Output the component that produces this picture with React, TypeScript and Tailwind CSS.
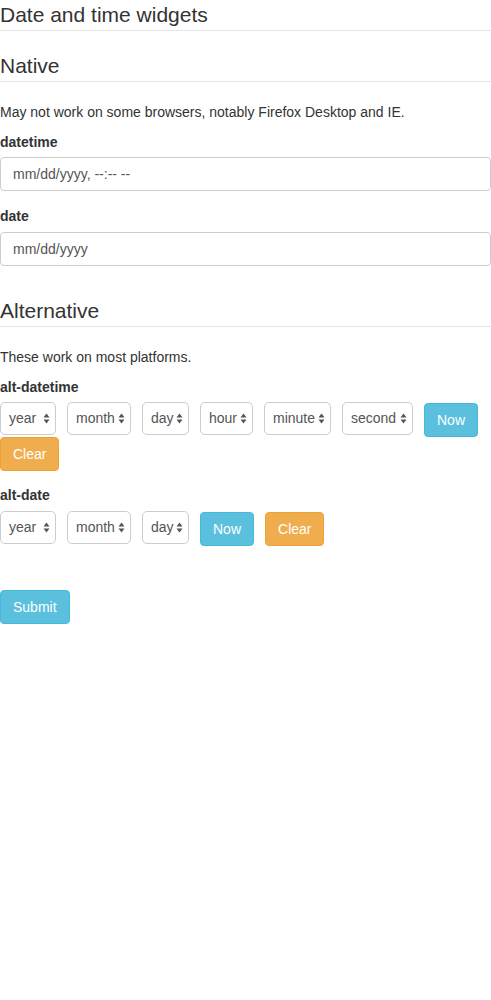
import React from 'react';

const font = { fontFamily: '"Liberation Sans", Arial, sans-serif' };

function Legend({ children, className = '' }: { children: React.ReactNode; className?: string }) {
  return (
    <div
      className={`h-[31px] border-b border-[#e5e5e5] text-[21px] leading-[30px] text-[#333] ${className}`}
    >
      {children}
    </div>
  );
}

function Label({ children }: { children: React.ReactNode }) {
  return <div className="h-[20px] text-[14px] font-bold leading-[20px] text-[#333]">{children}</div>;
}

function Arrows() {
  return (
    <svg width="7" height="11" viewBox="0 0 7 11" className="shrink-0">
      <path d="M3.5 0.5 L6.5 4.5 L0.5 4.5 Z" fill="#555" />
      <path d="M3.5 10.5 L6.5 6.5 L0.5 6.5 Z" fill="#555" />
    </svg>
  );
}

function FakeSelect({ label, width }: { label: string; width: string }) {
  return (
    <div
      className={`flex h-[33px] items-center justify-between rounded-[5px] border border-[#ccc] bg-white pl-[8px] pr-[5px] text-[14px] text-[#555] ${width}`}
    >
      <span>{label}</span>
      <Arrows />
    </div>
  );
}

function Btn({
  children,
  kind,
  className = '',
}: {
  children: React.ReactNode;
  kind: 'info' | 'warning';
  className?: string;
}) {
  const cls =
    kind === 'info'
      ? 'bg-[#5bc0de] border-[#46b8da]'
      : 'bg-[#f0ad4e] border-[#eea236]';
  return (
    <button
      type="button"
      className={`h-[34px] rounded-[4px] border px-[12px] text-[14px] leading-[20px] text-white ${cls} ${className}`}
    >
      {children}
    </button>
  );
}

function TextInput({ placeholder }: { placeholder: string }) {
  return (
    <div className="flex h-[34px] w-[491px] items-center rounded-[4px] border border-[#ccc] bg-white px-[12px] text-[14px] text-[#555]">
      {placeholder}
    </div>
  );
}

export default function App() {
  return (
    <div className="min-h-[1000px] w-[491px] bg-white text-[14px] text-[#333]" style={font}>
      <Legend>Date and time widgets</Legend>

      <Legend className="mt-[20px]">Native</Legend>
      <p className="mt-[20px] h-[20px] leading-[20px]">
        May not work on some browsers, notably Firefox Desktop and IE.
      </p>

      <div className="mt-[10px]">
        <Label>datetime</Label>
        <div className="mt-[5px]">
          <TextInput placeholder="mm/dd/yyyy, --:-- --" />
        </div>
      </div>

      <div className="mt-[15px]">
        <Label>date</Label>
        <div className="mt-[6px]">
          <TextInput placeholder="mm/dd/yyyy" />
        </div>
      </div>

      <Legend className="mt-[30px]">Alternative</Legend>
      <p className="mt-[20px] h-[20px] leading-[20px]">These work on most platforms.</p>

      <div className="mt-[10px]">
        <Label>alt-datetime</Label>
        <div className="mt-[5px] flex flex-wrap items-start gap-x-[11px]">
          <FakeSelect label="year" width="w-[56px]" />
          <FakeSelect label="month" width="w-[64px]" />
          <FakeSelect label="day" width="w-[47px]" />
          <FakeSelect label="hour" width="w-[53px]" />
          <FakeSelect label="minute" width="w-[67px]" />
          <FakeSelect label="second" width="w-[71px]" />
          <Btn kind="info" className="mt-[1px]">
            Now
          </Btn>
          <Btn kind="warning">Clear</Btn>
        </div>
      </div>

      <div className="mt-[14px]">
        <Label>alt-date</Label>
        <div className="mt-[6px] flex items-start gap-x-[11px]">
          <FakeSelect label="year" width="w-[56px]" />
          <FakeSelect label="month" width="w-[64px]" />
          <FakeSelect label="day" width="w-[47px]" />
          <Btn kind="info" className="mt-[1px]">
            Now
          </Btn>
          <Btn kind="warning" className="mt-[1px]">
            Clear
          </Btn>
        </div>
      </div>

      <div className="mt-[44px]">
        <Btn kind="info">Submit</Btn>
      </div>
    </div>
  );
}
